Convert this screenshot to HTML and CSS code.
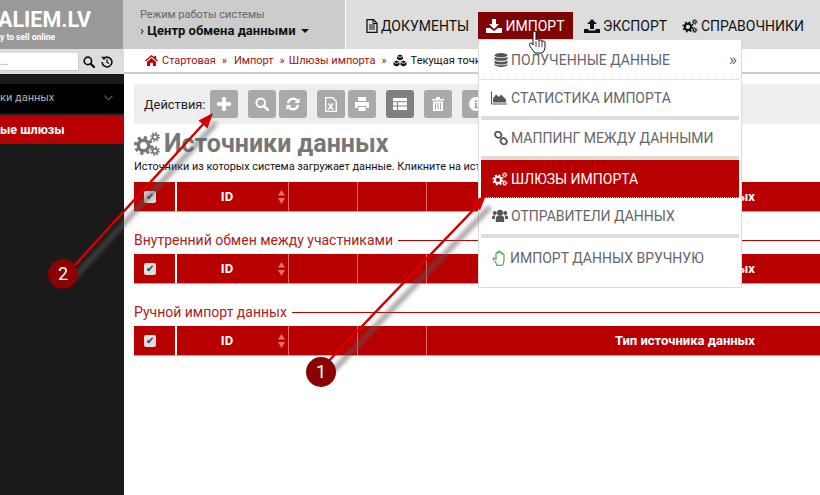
FILE: index.html
```html
<!DOCTYPE html>
<html lang="ru">
<head>
<meta charset="utf-8">
<title>Источники данных</title>
<link rel="stylesheet" href="styles.css">
</head>
<body>
<svg class="defs" width="0" height="0" aria-hidden="true">
  <defs>
    <symbol id="i-cogs" viewBox="0 0 26 24">
      <circle cx="9.500" cy="13.500" r="5.200" fill="none" stroke="currentColor" stroke-width="3.400"/>
      <circle cx="9.500" cy="13.500" r="8" fill="none" stroke="currentColor" stroke-width="3" stroke-dasharray="3.200 3.100"/>
      <circle cx="21" cy="5" r="2.400" fill="none" stroke="currentColor" stroke-width="1.800"/>
      <circle cx="21" cy="5" r="4.100" fill="none" stroke="currentColor" stroke-width="1.600" stroke-dasharray="1.600 1.600"/>
      <circle cx="21" cy="19" r="2.400" fill="none" stroke="currentColor" stroke-width="1.800"/>
      <circle cx="21" cy="19" r="4.100" fill="none" stroke="currentColor" stroke-width="1.600" stroke-dasharray="1.600 1.600"/>
    </symbol>
    <symbol id="i-search" viewBox="0 0 14 14">
      <circle cx="5.700" cy="5.700" r="4.300" fill="none" stroke="currentColor" stroke-width="2"/>
      <path d="M9 9l4 4" stroke="currentColor" stroke-width="2.600" stroke-linecap="round"/>
    </symbol>
    <symbol id="i-down" viewBox="0 0 16 14">
      <path d="M6 0h4v5h3l-5 5-5-5h3z" fill="currentColor"/>
      <path d="M0 9h4l4 3 4-3h4v5H0z" fill="currentColor"/>
    </symbol>
    <symbol id="i-up" viewBox="0 0 16 14">
      <path d="M6 10h4V5h3L8 0 3 5h3z" fill="currentColor"/>
      <path d="M0 10h4.500v1.500h7V10H16v4H0z" fill="currentColor"/>
    </symbol>
    <symbol id="i-sort" viewBox="0 0 7 14">
      <path d="M3.500 0L7 5.500H0zM0 8h7l-3.500 6z" fill="currentColor"/>
    </symbol>
  </defs>
</svg>

<div class="page">
  <header class="topbar">
    <div class="logo">
      <div class="logo-name">ALIEM.LV</div>
      <div class="logo-tag">y to sell online</div>
    </div>
    <div class="mode">
      <div class="mode-label">Режим работы системы</div>
      <div class="mode-value"><span class="mode-chev">›</span> Центр обмена данными <span class="mode-caret"></span></div>
    </div>
    <nav class="nav">
      <a class="nav-item">
        <svg class="nav-icon" viewBox="0 0 12 14"><path d="M1 .7h6.500L11 4.200V13.300H1z" fill="none" stroke="currentColor" stroke-width="1.300"/><path d="M3 6h6M3 8h6M3 10h6M7 1v3.500h3.500" fill="none" stroke="currentColor"/></svg>
        Документы
      </a>
      <a class="nav-item nav-active">
        <svg class="nav-icon-w"><use href="#i-down"/></svg>
        Импорт
      </a>
      <a class="nav-item">
        <svg class="nav-icon-w"><use href="#i-up"/></svg>
        Экспорт
      </a>
      <a class="nav-item">
        <svg class="nav-icon-w"><use href="#i-cogs"/></svg>
        Справочники
      </a>
    </nav>
  </header>

  <div class="content">
    <aside class="side">
      <div class="side-search">
        <div class="side-input">...</div>
        <svg class="side-icon"><use href="#i-search"/></svg>
        <svg class="side-icon" viewBox="0 0 14 14"><path d="M2.500 3.500A5.700 5.700 0 1 1 1.300 7" fill="none" stroke="currentColor" stroke-width="1.800"/><path d="M0 1h4v4z" fill="currentColor"/><path d="M7 3.800V7.500l2.300 1.300" fill="none" stroke="currentColor" stroke-width="1.500"/></svg>
      </div>
      <div class="side-menu">
        <div class="side-item">
          <span>ки данных</span>
          <svg class="side-chev" viewBox="0 0 10 6"><path d="M.5.5L5 5 9.500.5" fill="none" stroke="currentColor" stroke-width="1"/></svg>
        </div>
        <div class="side-item side-current"><span>ые шлюзы</span></div>
      </div>
    </aside>

    <main class="main">
      <div class="crumbs">
        <svg class="crumb-home" viewBox="0 0 14 12"><path d="M7 0l3 2.500V1h2v3.200L14 6l-.8 1L7 1.800.8 7 0 6z" fill="currentColor"/><path d="M2.200 7.300L7 3.300l4.800 4V12H8.500V8.500h-3V12H2.200z" fill="currentColor"/></svg>
        <a class="crumb">Стартовая</a><span class="crumb-sep">»</span>
        <a class="crumb">Импорт</a><span class="crumb-sep">»</span>
        <a class="crumb">Шлюзы импорта</a><span class="crumb-sep">»</span>
        <svg class="crumb-cubes" viewBox="0 0 14 12"><path d="M7 0l3 1.500v3L7 6 4 4.500v-3zM3.500 6l3 1.500v3L3.500 12 .5 10.500v-3zM10.500 6l3 1.500v3L10.500 12l-3-1.500v-3z" fill="currentColor"/><path d="M4 1.500L7 3l3-1.500M.5 7.500l3 1.500 3-1.500M7.500 7.500l3 1.500 3-1.500" fill="none" stroke="#fff" stroke-width=".8"/></svg>
        <span class="crumb-now">Текущая точка</span>
      </div>

      <div class="work">
        <div class="actions">
          <span class="actions-label">Действия:</span>
          <div class="btn-group">
            <button class="btn"><svg class="btn-icon" viewBox="0 0 12 12"><path d="M4.500 0h3v4.500H12v3H7.500V12h-3V7.500H0v-3h4.500z" fill="currentColor"/></svg></button>
          </div>
          <div class="btn-group">
            <button class="btn"><svg class="btn-icon"><use href="#i-search"/></svg></button>
            <button class="btn"><svg class="btn-icon" viewBox="0 0 14 14"><path d="M2 6a5.200 5.200 0 0 1 9-2.500M12 8a5.200 5.200 0 0 1-9 2.500" fill="none" stroke="currentColor" stroke-width="2.400"/><path d="M13.500 1v5h-5zM.5 13V8h5z" fill="currentColor"/></svg></button>
          </div>
          <div class="btn-group">
            <button class="btn"><svg class="btn-icon-tall" viewBox="0 0 12 15"><path d="M.7.7h7l3.600 3.600v10H.7z" fill="none" stroke="currentColor" stroke-width="1.300"/><path d="M3.500 6.500l4.500 6M8 6.500l-4.500 6" stroke="currentColor" stroke-width="1.500"/></svg></button>
            <button class="btn"><svg class="btn-icon" viewBox="0 0 14 14"><path d="M3 0h8v4H3zM0 5h14v6h-2.500V9h-9v2H0zM3.500 10h7v4h-7z" fill="currentColor"/></svg></button>
          </div>
          <div class="btn-group">
            <button class="btn btn-dark"><svg class="btn-icon" viewBox="0 0 14 12"><path d="M0 0h14v3.300H0zM0 4.300h4v3.300H0zM5 4.300h9v3.300H5zM0 8.600h4V12H0zM5 8.600h9V12H5z" fill="currentColor"/></svg></button>
          </div>
          <div class="btn-group">
            <button class="btn"><svg class="btn-icon" viewBox="0 0 12 14"><path d="M0 2h4V0h4v2h4v1.500H0zM1 4.500h10V14H1z" fill="currentColor"/><path d="M3.500 6v6.500M6 6v6.500M8.500 6v6.500" stroke="#a9a9a9"/></svg></button>
          </div>
          <div class="btn-group">
            <button class="btn"><svg class="btn-icon" viewBox="0 0 14 14"><circle cx="7" cy="7" r="7" fill="currentColor"/><path d="M6 3h2v2H6zM5.500 6H8v4h1v1.200H5V10h1V7.200h-.5z" fill="#a9a9a9"/></svg></button>
          </div>
        </div>

        <h1 class="title"><svg class="title-icon"><use href="#i-cogs"/></svg>Источники данных</h1>
        <p class="desc">Источники из которых система загружает данные. Кликните на источник для просмотра и настройки.</p>

        <div class="thead">
          <div class="th th-check"><span class="check">✔</span></div>
          <div class="th th-id"><span>ID</span><svg class="sort"><use href="#i-sort"/></svg></div>
          <div class="th th-blank"></div>
          <div class="th th-blank"></div>
          <div class="th th-type">Тип источника данных</div>
        </div>

        <h2 class="section"><span>Внутренний обмен между участниками</span></h2>
        <div class="thead">
          <div class="th th-check"><span class="check">✔</span></div>
          <div class="th th-id"><span>ID</span><svg class="sort"><use href="#i-sort"/></svg></div>
          <div class="th th-blank"></div>
          <div class="th th-blank"></div>
          <div class="th th-type">Тип источника данных</div>
        </div>

        <h2 class="section"><span>Ручной импорт данных</span></h2>
        <div class="thead">
          <div class="th th-check"><span class="check">✔</span></div>
          <div class="th th-id"><span>ID</span><svg class="sort"><use href="#i-sort"/></svg></div>
          <div class="th th-blank"></div>
          <div class="th th-blank"></div>
          <div class="th th-type">Тип источника данных</div>
        </div>
      </div>
    </main>
  </div>

  <div class="menu">
    <a class="menu-item mi-1 mi-dotted">
      <svg class="mi-icon" viewBox="0 0 14 14"><ellipse cx="7" cy="2.200" rx="6.500" ry="2.200" fill="currentColor"/><path d="M.5 3.800c1.500 1.800 11.500 1.800 13 0v2.400c-1.500 2-11.500 2-13 0zM.5 7.500c1.500 1.800 11.500 1.800 13 0v2.400c-1.500 2-11.500 2-13 0z" fill="currentColor"/><path d="M.5 11c1.500 1.800 11.500 1.800 13 0v.8c-.5 2.900-12.500 2.900-13 0z" fill="currentColor"/></svg>
      <span>Полученные данные</span><span class="mi-more">»</span>
    </a>
    <a class="menu-item mi-2">
      <svg class="mi-icon mi-icon-wide" viewBox="0 0 16 13"><path d="M.5 0v12.500H16" fill="none" stroke="currentColor"/><path d="M2 11V7l3-4 3 2.500L10 3l5 5v3z" fill="currentColor"/></svg>
      <span>Статистика импорта</span>
    </a>
    <div class="menu-sep"></div>
    <a class="menu-item mi-3">
      <svg class="mi-icon" viewBox="0 0 14 14"><g fill="none" stroke="currentColor" stroke-width="1.800"><rect x="1" y="1" width="6.500" height="5.500" rx="2.700" transform="rotate(45 4.200 3.700)"/><rect x="6.500" y="7.500" width="6.500" height="5.500" rx="2.700" transform="rotate(45 9.700 10.200)"/></g></svg>
      <span>Маппинг между данными</span>
    </a>
    <div class="menu-sep"></div>
    <a class="menu-item mi-4 mi-current">
      <svg class="mi-icon mi-icon-cogs"><use href="#i-cogs"/></svg>
      <span>Шлюзы импорта</span>
    </a>
    <a class="menu-item mi-5">
      <svg class="mi-icon mi-icon-cogs" viewBox="0 0 16 13"><circle cx="8" cy="3.300" r="3" fill="currentColor"/><circle cx="2.800" cy="3.500" r="2" fill="currentColor"/><circle cx="13.200" cy="3.500" r="2" fill="currentColor"/><path d="M3.800 12V9c0-2 1.500-3 3-3h2.400c1.500 0 3 1 3 3v3.500H3.800zM0 9.500V7.500c0-1 1-1.500 2-1.500h1.500C2.800 7 2.800 8 2.800 9.500zM16 9.500V7.500c0-1-1-1.500-2-1.500h-1.500c.7 1 .7 2 .7 3.500z" fill="currentColor"/></svg>
      <span>Отправители данных</span>
    </a>
    <div class="menu-sep"></div>
    <a class="menu-item mi-6">
      <svg class="mi-hand" viewBox="0 0 15 16"><path d="M1 8.500c1-1 2 0 3 1.200V3.500c0-1.600 2-1.600 2 0V2c0-1.600 2-1.600 2 0v1c0-1.500 2-1.500 2 0v1.500c0-1.500 2-1.500 2 0V10c0 2.500-1 5.300-1.500 5.300h-6C5 13 2 11 1 8.500z" fill="none" stroke="#2e8b2e" stroke-width="1"/></svg>
      <span>Импорт данных вручную</span>
    </a>
  </div>

  <svg class="overlay" viewBox="0 0 820 495" aria-hidden="true">
    <defs>
      <filter id="blur" x="-20%" y="-20%" width="140%" height="140%"><feGaussianBlur stdDeviation="2"/></filter>
    </defs>
    <path class="ar-shadow" d="M72 280L216 123"/>
    <path class="ar-shadow" d="M327 377L490 207"/>
    <path class="ar-line" d="M66 275L206 121"/>
    <path class="ar-head" d="M213 113L207.500 128.500 198.500 120.500z"/>
    <path class="ar-line" d="M322 368L478 205"/>
    <path class="ar-head" d="M486 195L480 210.500 471 202z"/>
    <circle class="badge" cx="63" cy="274" r="15"/>
    <text class="badge-num" x="63" y="280">2</text>
    <circle class="badge" cx="321" cy="372" r="15"/>
    <text class="badge-num" x="321" y="378">1</text>
    <path class="cursor" d="M534 31c1.500 0 2 1 2 2v7c0-1.500 3-1.500 3 0v1c0-1.500 3-1.500 3 0v1c0-1.500 3-1.300 3 .5v5c0 2-1.500 4.500-3 5.500h-7c-2-2.500-5-6-5.500-8.500-.3-1.500 2-2 3-.5l.5 1V33c0-1 .5-2 1.500-2z"/>
    <path class="cursor-lines" d="M536 41v6M539 41v6M542 42v5"/>
  </svg>
</div>
</body>
</html>
```
FILE: styles.css
```css
* { box-sizing: border-box; }
html, body { margin: 0; padding: 0; }
body {
  width: 820px;
  height: 495px;
  overflow: hidden;
  background: #fff;
  font-family: Roboto, "Liberation Sans", sans-serif;
  color: #111;
}
.defs { position: absolute; }
.page { position: relative; width: 820px; height: 495px; overflow: hidden; display: flex; flex-direction: column; }

/* top bar */
.topbar { display: flex; height: 49px; background: #ddd; flex: none; }
.logo { width: 124px; background: #999; color: #fff; font-weight: 700; padding-top: 8px; overflow: hidden; flex: none; border-right: 1px solid #ccc; }
.logo-name { font-size: 21.500px; line-height: 24px; margin-left: -2px; white-space: nowrap; }
.logo-tag { font-size: 8.500px; line-height: 11px; white-space: nowrap; }
.mode { width: 222px; flex: none; background: #ccc; border-right: 1px solid #fff; padding: 8px 0 0 16px; }
.mode-label { font-size: 11px; line-height: 14px; color: #666; }
.mode-value { font-size: 13px; line-height: 15px; margin-top: 1px; font-weight: 700; color: #111; white-space: nowrap; }
.mode-chev { font-weight: 400; }
.mode-caret { display: inline-block; width: 0; height: 0; margin-left: 2px; vertical-align: 2px; border: 4px solid transparent; border-top-color: #111; border-bottom: 0; }
.nav { display: flex; align-items: flex-start; padding: 12px 0 0 20px; gap: 0; flex: 1; }
.nav-item { display: flex; align-items: center; gap: 3px; height: 27px; padding: 0 8px 0 0; font-size: 14px; text-transform: uppercase; color: #111; white-space: nowrap; }
.nav-item:first-child { width: 112px; padding-right: 0; }
.nav-active { width: 95px; justify-content: center; padding: 0; background: #7f0505; color: #fff; }
.nav-item:nth-child(3) { margin-left: 11px; width: 98px; padding: 0; }
.nav-item:nth-child(4) { width: 130px; padding: 0; }
.nav-icon { width: 12px; height: 14px; flex: none; }
.nav-icon-w { width: 16px; height: 14px; flex: none; }

.content { flex: 1; display: flex; min-height: 0; }

/* sidebar */
.side { width: 124px; flex: none; background: #1a1a1a; display: flex; flex-direction: column; }
.side-search { height: 25px; background: #ddd; display: flex; align-items: center; gap: 6px; padding-top: 0; }
.side-input { width: 79px; height: 18px; background: #fff; border-right: 1px solid #ccc; border-bottom: 1px solid #ccc; font-size: 11px; line-height: 17px; color: #888; margin-right: -2px; }
.side-icon { width: 12px; height: 12px; color: #111; flex: none; }
.side-menu { padding-top: 10px; }
.side-item { height: 29px; background: #000; color: #b5b5b5; font-size: 11px; display: flex; align-items: center; justify-content: space-between; padding: 0 11px 2px 0; white-space: nowrap; }
.side-current { margin-top: 2px; padding-bottom: 0; background: #b80000; color: #fff; font-weight: 700; font-size: 12.500px; }
.side-chev { width: 9px; height: 6px; color: #aaa; }

/* main */
.main { flex: 1; min-width: 0; overflow: hidden; }
.crumbs { height: 25px; border-bottom: 2px solid #ccc; display: flex; align-items: center; padding-left: 21px; font-size: 11px; white-space: nowrap; }
.crumb-home { width: 13px; height: 11px; color: #b80000; margin-right: 4px; flex: none; }
.crumb { color: #a01010; }
.crumb-sep { color: #a01010; margin: 0 7px 0 6px; }
.crumb-sep:nth-of-type(2) { margin-right: 4px; }
.crumb-sep:nth-of-type(3) { margin-right: 6px; }
.crumb-cubes { width: 14px; height: 13px; margin: 0 4px 0 0; color: #111; flex: none; }
.crumb-now { color: #111; }

.work { padding: 10px 0 0 10px; width: 819px; }
.actions { height: 40px; background: #eee; display: flex; align-items: center; padding-left: 10px; gap: 10px; }
.actions-label { font-size: 12.800px; color: #222; margin-right: -6px; width: 62px; }
.btn-group { display: flex; gap: 3px; }
.btn { width: 28px; height: 28px; border: 0; padding: 0; border-radius: 3px; background: #a9a9a9; color: #fff; display: flex; align-items: center; justify-content: center; }
.btn-dark { background: #808080; }
.btn-icon { width: 14px; height: 14px; }
.btn-icon-tall { width: 12px; height: 15px; }

.title { margin: 5px 0 0; height: 30px; display: flex; align-items: center; gap: 4px; font-size: 25px; line-height: 30px; font-weight: 700; color: #777; }
.title-icon { width: 26px; height: 24px; flex: none; }
.desc { margin: 0 0 7px; height: 16px; font-size: 10.900px; line-height: 16px; color: #111; white-space: nowrap; overflow: hidden; }

.thead { display: flex; height: 30px; width: 809px; background: #b80000; border-bottom: 1px solid #aaa; color: #fff; font-size: 13px; font-weight: 700; }
.th { display: flex; align-items: center; height: 29px; }
.th-check { width: 43px; justify-content: flex-start; padding-left: 10px; border-right: 2px solid #fff; flex: none; }
.check { width: 12px; height: 12px; border-radius: 2px; background: #ddd; color: #333; font-size: 10px; line-height: 12px; text-align: center; font-weight: 400; }
.th-id { width: 112px; position: relative; justify-content: center; padding-right: 11px; border-right: 1px solid #e86a6a; flex: none; }
.sort { position: absolute; right: 3px; top: 8px; width: 7px; height: 14px; color: #f07070; }
.th-blank { width: 69px; border-right: 1px solid #e86a6a; flex: none; }
.th-type { flex: 1; justify-content: center; }

.section { margin: 0; font-size: 14px; font-weight: 400; color: #b02020; height: 42px; padding-top: 14px; line-height: 17px; display: flex; align-items: center; }
.section::after { content: ""; flex: 1; height: 1px; background: #c00000; margin-left: 5px; }
.section span { white-space: nowrap; }

/* dropdown */
.menu { position: absolute; left: 478px; top: 40px; width: 264px; height: 248px; background: #fff; border: 1px solid #ddd; border-top: 0; padding: 0 2px; display: flex; flex-direction: column; box-shadow: 0 0 1px rgba(0,0,0,.08); }
.menu-item { display: flex; align-items: center; font-size: 14px; text-transform: uppercase; color: #666; white-space: nowrap; position: relative; }
.mi-1 { height: 40px; padding-left: 13px; }
.mi-dotted { border-bottom: 1px dotted #ccc; }
.mi-2 { height: 36px; padding-left: 10px; }
.mi-3 { height: 36px; padding-left: 13px; }
.mi-4 { height: 38px; padding-left: 11px; }
.mi-5 { height: 36px; padding-left: 11px; }
.mi-6 { height: 49px; padding: 0 0 9px 11px; }
.menu-sep { height: 4px; background: #ddd; flex: none; }
.mi-current { background: #b80000; color: #fff; border-bottom: 1px dotted #ddd; }
.mi-icon { width: 14px; height: 14px; margin-right: 3px; flex: none; color: #555; }
.mi-icon-wide { width: 16px; margin-right: 4px; }
.mi-icon-cogs { width: 16px; margin-right: 3px; }
.mi-current .mi-icon { color: #fff; }
.mi-hand { width: 15px; height: 16px; margin-right: 3px; flex: none; }
.mi-more { position: absolute; right: 2px; top: 9px; font-size: 17px; color: #666; }

/* annotations */
.overlay { position: absolute; left: 0; top: 0; width: 820px; height: 495px; pointer-events: none; }
.ar-shadow { fill: none; stroke: rgba(90,90,90,.6); stroke-width: 5; filter: url(#blur); }
.ar-line { fill: none; stroke: #d40000; stroke-width: 2.500; }
.ar-head { fill: #d40000; }
.badge { fill: #8b0000; }
.badge-num { fill: #fff; font-family: Roboto, sans-serif; font-size: 18px; text-anchor: middle; }
.cursor { fill: #fff; stroke: #111; stroke-width: 1; }
.cursor-lines { stroke: #111; stroke-width: .8; fill: none; }
```
